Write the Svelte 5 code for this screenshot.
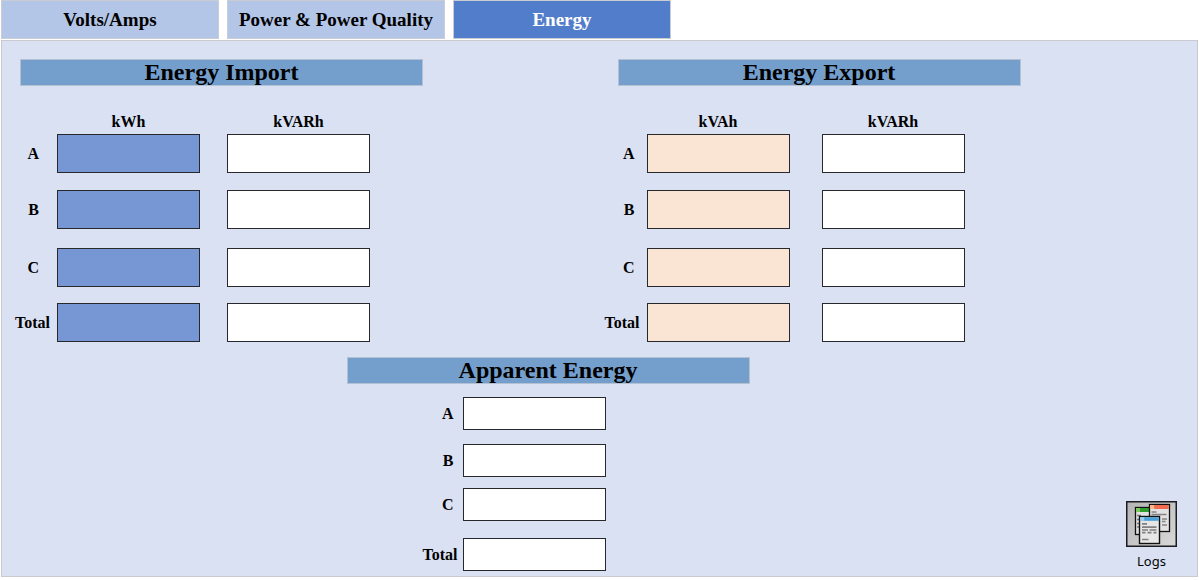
<script>
  const tabs = ['Volts/Amps', 'Power & Power Quality', 'Energy'];
  const rows = ['A', 'B', 'C', 'Total'];
  const meters = [
    { id: 'import', title: 'Energy Import', units: ['kWh', 'kVARh'] },
    { id: 'export', title: 'Energy Export', units: ['kVAh', 'kVARh'] }
  ];
  let active = $state('Energy');
</script>

<nav class="tabs">
  {#each tabs as tab}
    <button type="button" class="tab" class:active={active === tab} onclick={() => (active = tab)}>{tab}</button>
  {/each}
</nav>

<main class="panel">
  <div class="meters">
    {#each meters as meter}
      <section class="meter {meter.id}">
        <h2>{meter.title}</h2>
        <div class="units">
          <span></span>
          {#each meter.units as unit, i}
            <span class="unit" id="{meter.id}-unit-{i}">{unit}</span>
          {/each}
        </div>
        <div class="readings">
          {#each rows as row}
            <label id="{meter.id}-{row}" for="{meter.id}-{row}-0" class:total={row === 'Total'}>{row}</label>
            {#each meter.units as unit, i}
              <input
                id="{meter.id}-{row}-{i}"
                class:main={i === 0}
                type="text"
                readonly
                aria-labelledby="{meter.id}-{row} {meter.id}-unit-{i}"
              />
            {/each}
          {/each}
        </div>
      </section>
    {/each}
  </div>

  <div class="lower">
    <section class="apparent">
      <h2>Apparent Energy</h2>
      <div class="readings">
        {#each rows as row}
          <label for="apparent-{row}" class:total={row === 'Total'}>{row}</label>
          <input id="apparent-{row}" type="text" readonly />
        {/each}
      </div>
    </section>

    <button type="button" class="logs">
      <svg width="51" height="46" viewBox="0 0 51 46" aria-hidden="true">
        <defs>
          <linearGradient id="plate" x1="0" y1="0" x2="1" y2="1">
            <stop offset="0" stop-color="#b4b4b4" />
            <stop offset="1" stop-color="#d8d8d8" />
          </linearGradient>
        </defs>
        <rect x="0.75" y="0.75" width="49.5" height="44.5" fill="url(#plate)" stroke="#1b1b22" stroke-width="1.5" />
        <rect x="9.500" y="6.500" width="19" height="27" fill="#e2e2e2" stroke="#111" stroke-width="1.3" />
        <rect x="10" y="7" width="17.600" height="4" fill="#2f9e2f" />
        <rect x="10" y="7" width="4" height="4" fill="#7cc95c" />
        <path d="M11 14.500h4M11 18.500h3M11 22.500h3M11 26h3" stroke="#777" stroke-width="1.600" />
        <rect x="23.500" y="3.500" width="20" height="27" fill="#e2e2e2" stroke="#111" stroke-width="1.300" />
        <rect x="24.200" y="4" width="18.600" height="4" fill="#f26b4e" />
        <rect x="24.200" y="4" width="4" height="4" fill="#ffb88c" />
        <path d="M25.500 11h5M25.500 13.500h15M36 18h5M36 20.500h3.500M36 24h5" stroke="#858585" stroke-width="1.700" />
        <rect x="13.500" y="15.500" width="20" height="27" fill="#e6e6e6" stroke="#111" stroke-width="1.400" />
        <rect x="14.200" y="16.200" width="18.600" height="3.600" fill="#4aa0d8" />
        <rect x="14.200" y="16.200" width="4" height="3.600" fill="#9bd0ef" />
        <path d="M16 22.800h5M16 26.200h14.500M16 29h6M23.500 29h7M16 31.700h3.500M21.500 31.700h4M27.500 31.700h3M16 38.500h6.500" stroke="#808080" stroke-width="1.700" />
      </svg>
      <span>Logs</span>
    </button>
  </div>
</main>

<style>
  :global(body) {
    background: #fff;
    color: #000;
    font-family: 'Liberation Serif', 'Times New Roman', serif;
  }

  button {
    margin: 0;
    padding: 0;
    border: 0;
    background: none;
    color: inherit;
    font: inherit;
    cursor: pointer;
  }

  .tabs {
    display: flex;
    gap: 8px;
    padding: 0 1px 1px;
  }

  .tab {
    width: 218px;
    height: 39px;
    border: 1px solid #c9ccd3;
    background: #b4c6e7;
    font-size: 19px;
    font-weight: bold;
  }

  .tab.active {
    background: #527dca;
    color: #fff;
  }

  .panel {
    margin: 0 1px;
    border: 1px solid #c8cacf;
    background: #dae1f3;
  }

  .meters {
    display: grid;
    grid-template-columns: 1fr 1fr;
    padding-top: 18px;
  }

  h2 {
    box-sizing: border-box;
    height: 27px;
    margin: 0;
    border: 1px solid #b3c1d3;
    background: #749fcd;
    font-size: 24px;
    line-height: 25px;
    text-align: center;
  }

  .meter h2 {
    max-width: 403px;
    margin-left: 18px;
  }

  .units,
  .readings {
    display: grid;
    justify-content: start;
    font-size: 16px;
    font-weight: bold;
    line-height: 18px;
  }

  .import .units,
  .import .readings {
    grid-template-columns: 55px 170px 143px;
  }

  .export .units,
  .export .readings {
    grid-template-columns: 47px 175px 143px;
  }

  .units {
    padding-top: 27px;
    padding-bottom: 3px;
    text-align: center;
  }

  .unit {
    width: 143px;
  }

  .meter .readings {
    grid-template-rows: 56px 58px 55px 40px;
  }

  .readings label {
    padding-right: 12px;
    line-height: 39px;
    text-align: right;
  }

  .import .readings label {
    padding-right: 18px;
  }

  .readings label.total,
  .import .readings label.total {
    padding-right: 7px;
  }

  input {
    box-sizing: border-box;
    width: 143px;
    height: 39px;
    margin: 0;
    padding: 0 8px;
    border: 1px solid #26282c;
    border-radius: 0;
    background: #fff;
    font: inherit;
  }

  .import .main {
    background: #7797d4;
  }

  .export .main {
    background: #fae5d5;
  }

  .lower {
    display: grid;
    grid-template-columns: 1fr 403px 1fr 103px;
    padding-top: 14px;
  }

  .apparent {
    grid-column: 2;
  }

  .apparent .readings {
    grid-template-columns: 116px 143px;
    grid-template-rows: 47px 44px 50px 38px;
    padding-top: 13px;
  }

  .apparent .readings label {
    padding-right: 9px;
    line-height: 34px;
  }

  .apparent .readings label.total {
    padding-right: 5px;
  }

  .apparent input {
    height: 33px;
  }

  .logs {
    display: flex;
    grid-column: 4;
    flex-direction: column;
    align-items: center;
    align-self: end;
    justify-self: end;
    margin-right: 20px;
    font-family: 'Noto Sans', sans-serif;
    font-size: 13px;
    line-height: 29px;
  }

  .logs svg {
    display: block;
  }
</style>
